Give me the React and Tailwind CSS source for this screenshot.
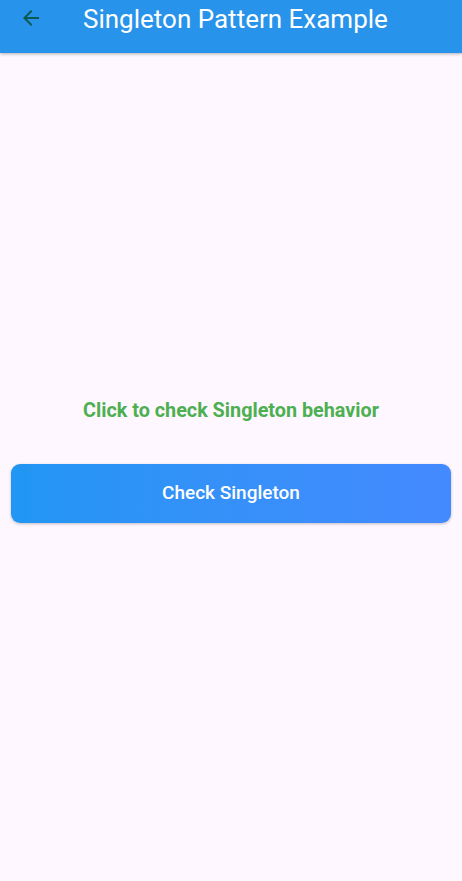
export default function App() {
  return (
    <div className="min-h-[881px] w-full bg-[#fef7ff] flex flex-col" style={{ fontFamily: "Roboto, 'Noto Sans', sans-serif" }}>
      <header className="h-[53px] bg-[#2893eb] flex items-start shadow-[0_1px_3px_rgba(0,0,0,0.3)] relative z-10">
        <div className="w-[83px] pl-[19px] pt-[6px] flex">
          <svg width="24" height="24" viewBox="0 0 24 24" fill="#0b5a52">
            <path d="M20 11H7.83l5.59-5.59L12 4l-8 8 8 8 1.41-1.41L7.83 13H20v-2z" />
          </svg>
        </div>
        <h1 className="text-white text-[26px] leading-[32px] font-normal pt-[3px]">Singleton Pattern Example</h1>
      </header>
      <main className="flex-1 flex flex-col items-center justify-center px-[11px] pb-[12px]">
        <p className="text-[#4caf50] text-[19.8px] font-bold leading-[24px]">Click to check Singleton behavior</p>
        <button className="mt-[41px] w-full h-[59px] rounded-[9px] bg-gradient-to-r from-[#2196f3] to-[#448aff] text-white text-[19px] font-medium shadow-[0_1px_3px_rgba(0,0,0,0.25)]">
          Check Singleton
        </button>
      </main>
    </div>
  );
}
